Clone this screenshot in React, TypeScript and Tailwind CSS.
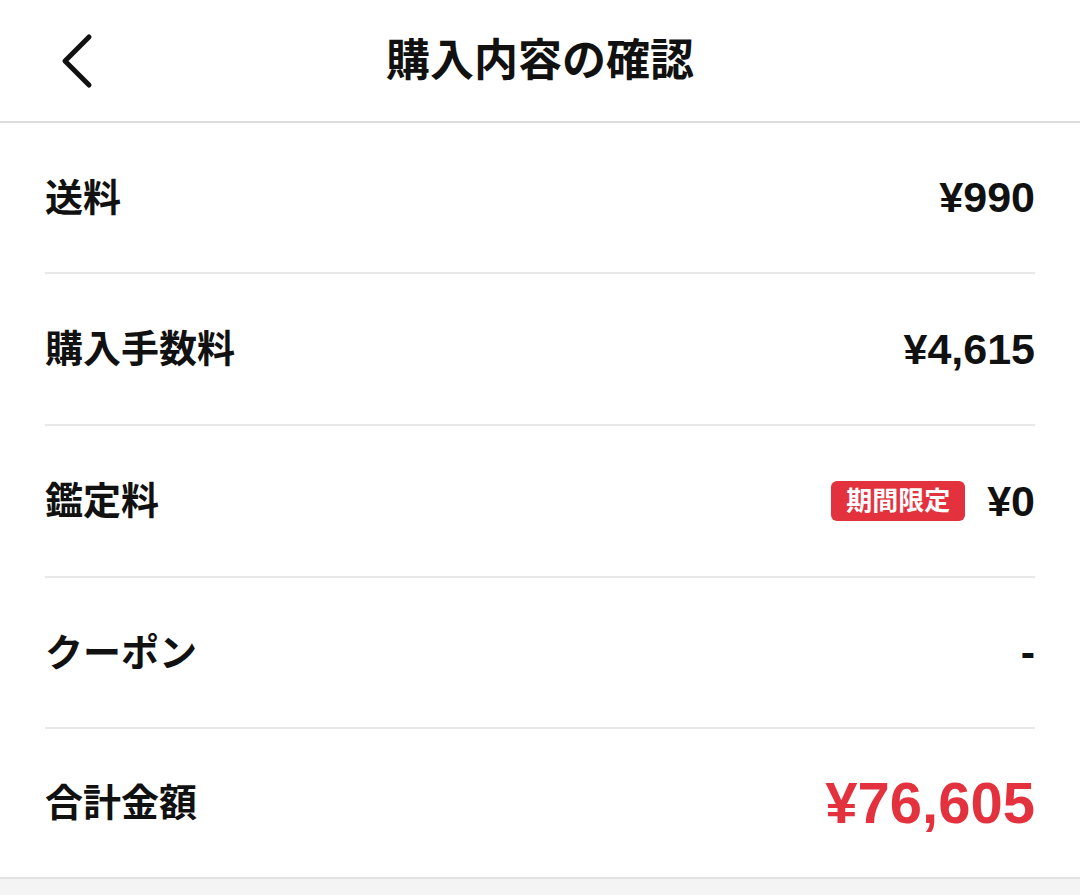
const font = {
  fontFamily: '"Liberation Sans", "Noto Sans CJK JP", sans-serif',
};

type Row = { label: string; value: string; badge?: string; total?: boolean; h: string };

const rows: Row[] = [
  { label: "送料", value: "¥990", h: "h-[151px]" },
  { label: "購入手数料", value: "¥4,615", h: "h-[152px]" },
  { label: "鑑定料", value: "¥0", badge: "期間限定", h: "h-[152px]" },
  { label: "クーポン", value: "-", h: "h-[151px]" },
  { label: "合計金額", value: "¥76,605", total: true, h: "h-[148px]" },
];

export default function App() {
  return (
    <div className="w-[1080px] h-[895px] bg-[#f4f4f4] text-[#111]" style={font}>
      {/* header */}
      <div className="relative h-[123px] bg-white border-b-2 border-[#dcdcdc] flex items-center justify-center">
        <svg
          className="absolute left-[55px] top-[33px]"
          width="44"
          height="56"
          viewBox="0 0 44 56"
          fill="none"
          stroke="#111"
          strokeWidth="5"
          strokeLinecap="round"
          strokeLinejoin="round"
        >
          <path d="M34 4 L10 28 L34 52" />
        </svg>
        <h1 className="text-[44px] font-bold leading-none">購入内容の確認</h1>
      </div>

      {/* rows */}
      <div className="bg-white px-[45px] border-b-2 border-[#e2e2e2]">
        {rows.map((row, i) => (
          <div
            key={row.label}
            className={`flex items-center justify-between ${row.h} ${
              i < rows.length - 1 ? "border-b-2 border-[#e8e8e8]" : ""
            }`}
          >
            <span className="text-[38px] font-bold leading-none">{row.label}</span>
            <div className="flex items-center gap-[22px]">
              {row.badge && (
                <span className="h-[40px] px-[15px] rounded-[6px] bg-[#e3323e] text-white text-[26px] font-bold flex items-center leading-none">
                  {row.badge}
                </span>
              )}
              <span
                className={
                  row.total
                    ? "text-[58px] font-bold leading-none text-[#e3323e]"
                    : "text-[43px] font-bold leading-none"
                }
              >
                {row.value}
              </span>
            </div>
          </div>
        ))}
      </div>
    </div>
  );
}
